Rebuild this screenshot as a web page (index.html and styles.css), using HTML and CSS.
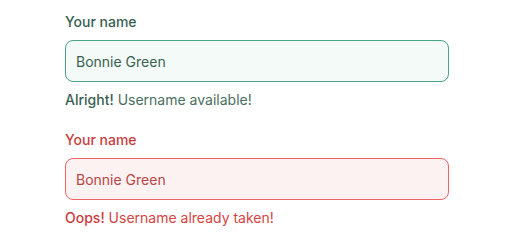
FILE: index.html
```html
<!DOCTYPE html>
<html lang="en">
<head>
<meta charset="utf-8">
<title>Validation</title>
<link rel="stylesheet" href="styles.css">
</head>
<body>
<form class="form">
  <div class="field success">
    <label class="label" for="name-ok">Your name</label>
    <input class="input" id="name-ok" type="text" value="Bonnie Green">
    <p class="help"><span class="strong">Alright!</span> Username available!</p>
  </div>
  <div class="field error">
    <label class="label" for="name-err">Your name</label>
    <input class="input" id="name-err" type="text" value="Bonnie Green">
    <p class="help"><span class="strong">Oops!</span> Username already taken!</p>
  </div>
</form>
</body>
</html>
```
FILE: styles.css
```css
html, body {
  margin: 0;
  background: #ffffff;
}
body {
  font-family: "Inter", "Noto Sans", sans-serif;
  font-size: 14px;
  line-height: 20px;
  padding: 12px 0 0 65px;
}
.form {
  display: flex;
  flex-direction: column;
  gap: 20px;
  width: 384px;
}
.field {
  display: flex;
  flex-direction: column;
}
.label {
  display: block;
  font-weight: 500;
  margin-bottom: 8px;
}
.input {
  box-sizing: border-box;
  width: 100%;
  height: 42px;
  padding: 10px;
  border: 1px solid;
  border-radius: 8px;
  font-family: inherit;
  font-size: 14px;
  line-height: 20px;
  outline: none;
}
.help {
  margin: 8px 0 0;
}
.strong {
  font-weight: 500;
}
.success .label { color: #3a5f52; }
.success .input {
  background: #f3faf7;
  border-color: #4aa582;
  color: #3a5f52;
}
.success .help { color: #4a6e61; }
.success .help .strong { color: #3a5f52; }

.error .label { color: #c94040; }
.error .input {
  background: #fdf2f2;
  border-color: #ee6464;
  color: #b94444;
}
.error .help { color: #d44444; }
.error .help .strong { color: #c93c3c; }
```
